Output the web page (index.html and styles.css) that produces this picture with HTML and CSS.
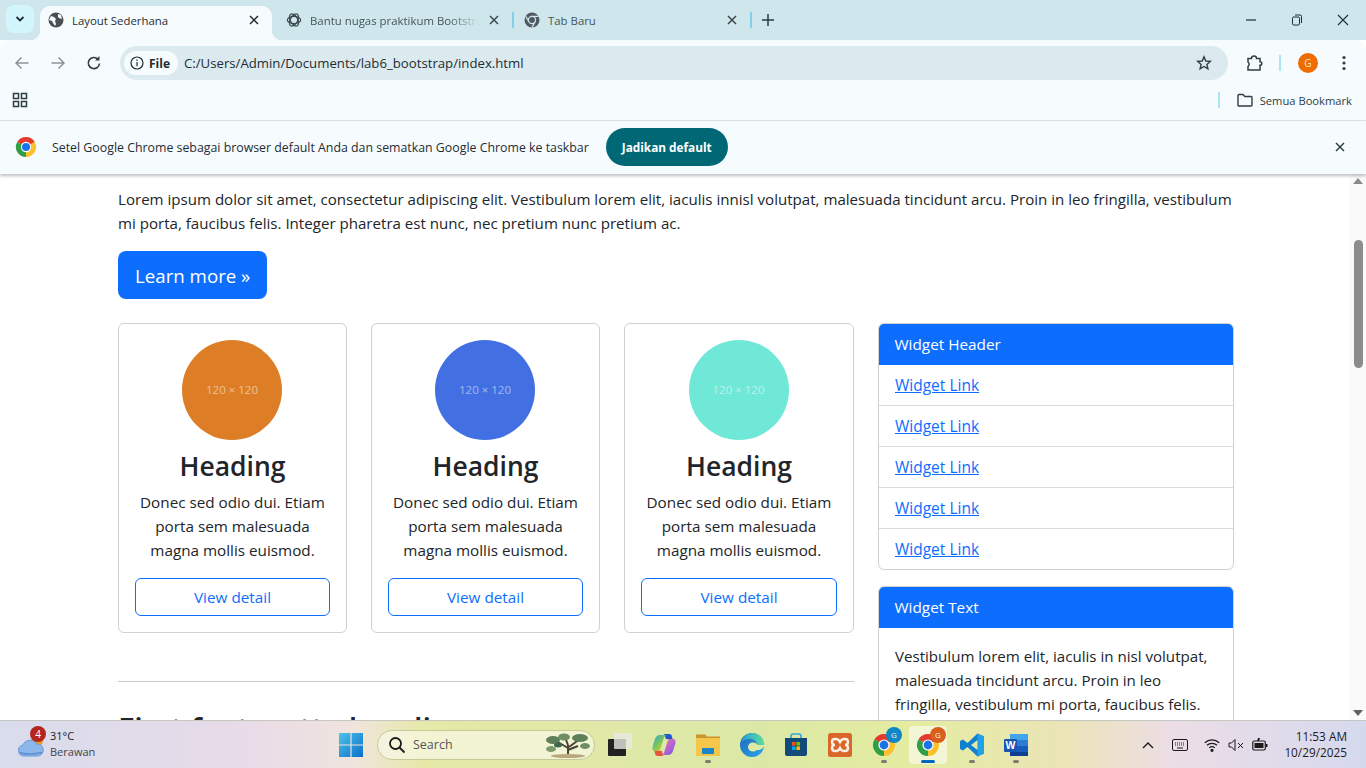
FILE: index.html
```html
<!DOCTYPE html>
<html lang="id">
<head>
  <meta charset="UTF-8" />
  <title>Layout Sederhana</title>
  <link rel="stylesheet" href="styles.css">
</head>
<body>
  <svg class="defs" width="0" height="0">
    <symbol id="chrome" viewBox="0 0 24 24">
      <path fill="#e33b2e" d="M12 12 2.470 6.500A11 11 0 0 1 21.530 6.500Z"/>
      <path fill="#fbc02d" d="M12 12 21.530 6.500A11 11 0 0 1 12 23Z"/>
      <path fill="#2f9e44" d="M12 12V23A11 11 0 0 1 2.470 6.500Z"/>
      <circle cx="12" cy="12" r="5.600" fill="#fff"/>
      <circle cx="12" cy="12" r="4.400" fill="#1a73e8"/>
    </symbol>
    <symbol id="close" viewBox="0 0 12 12">
      <path d="M2 2 10 10M10 2 2 10" fill="none" stroke="currentColor" stroke-width="1.500"/>
    </symbol>
  </svg>

  <div class="tabstrip">
    <div class="tab-menu">
      <svg width="10" height="10" viewBox="0 0 10 10"><path d="M1.500 3 5 6.500 8.500 3" fill="none" stroke="#1f2d33" stroke-width="1.800"/></svg>
    </div>
    <div class="tab active">
      <svg width="16" height="16" viewBox="0 0 16 16"><circle cx="8" cy="8" r="7.500" fill="#474f53"/><path d="M3 4l3 1 2 2-1 2 1 3-1 2-2-3-1-2-3-1zM10 2l3 1 1 4-3-1-1-1z" fill="#f7fbfd"/></svg>
      <span class="tab-title">Layout Sederhana</span>
      <svg class="tab-x" width="12" height="12"><use href="#close"/></svg>
    </div>
    <div class="tab second">
      <svg width="16" height="16" viewBox="0 0 24 24" fill="none" stroke="#3c494f" stroke-width="1.800"><ellipse cx="12" cy="12" rx="10" ry="5.500"/><ellipse cx="12" cy="12" rx="10" ry="5.500" transform="rotate(60 12 12)"/><ellipse cx="12" cy="12" rx="10" ry="5.500" transform="rotate(120 12 12)"/></svg>
      <span class="tab-title fade">Bantu nugas praktikum Bootstrap</span>
      <svg class="tab-x" width="12" height="12"><use href="#close"/></svg>
    </div>
    <i class="tab-sep"></i>
    <div class="tab third">
      <svg width="16" height="16" viewBox="0 0 16 16"><circle cx="8" cy="8" r="7.500" fill="#4f5a5f"/><circle cx="8" cy="8" r="3.600" fill="#4f5a5f" stroke="#d0e7ec" stroke-width="1.200"/><path d="M8 4.400h6.500M4.900 9.800 1.800 4.400M11.100 9.800 8 15.400" stroke="#d0e7ec" stroke-width="1.200"/></svg>
      <span class="tab-title">Tab Baru</span>
      <svg class="tab-x" width="12" height="12"><use href="#close"/></svg>
    </div>
    <i class="tab-sep"></i>
    <svg class="new-tab" width="12" height="12" viewBox="0 0 12 12"><path d="M6 0v12M0 6h12" stroke="#2c3b41" stroke-width="1.500"/></svg>
    <div class="win-btns">
      <svg width="12" height="12" viewBox="0 0 12 12"><path d="M1 6h10" stroke="#1f2d33" stroke-width="1.200"/></svg>
      <svg width="12" height="12" viewBox="0 0 12 12" fill="none" stroke="#1f2d33"><rect x="1.500" y="3" width="7" height="8" rx="1.200"/><path d="M4 1h5a1.500 1.500 0 0 1 1.500 1.500V9"/></svg>
      <svg width="12" height="12" viewBox="0 0 12 12"><path d="M1 1 11 11M11 1 1 11" stroke="#1f2d33" stroke-width="1.100"/></svg>
    </div>
  </div>

  <div class="toolbar">
    <svg class="nav-icon" width="16" height="16" viewBox="0 0 16 16" fill="none" stroke="#8b979c" stroke-width="1.500"><path d="M14.500 8H2M7.500 2.500 2 8l5.500 5.500"/></svg>
    <svg class="nav-icon" width="16" height="16" viewBox="0 0 16 16" fill="none" stroke="#8b979c" stroke-width="1.500"><path d="M1.500 8H14M8.500 2.500 14 8l-5.500 5.500"/></svg>
    <svg class="nav-icon" width="16" height="16" viewBox="0 0 16 16" fill="none" stroke="#2f3e44" stroke-width="1.600"><path d="M13.500 8.500A5.600 5.600 0 1 1 12 4.200"/><path d="M13.500 1v4.500H9" fill="#2f3e44" stroke="none"/></svg>
    <div class="omnibox">
      <div class="site-chip">
        <svg width="14" height="14" viewBox="0 0 14 14" fill="none" stroke="#1f2d33" stroke-width="1.200"><circle cx="7" cy="7" r="6"/><path d="M7 6v4.200M7 3.500v1.400"/></svg>
        <b>File</b>
      </div>
      <span class="url">C:/Users/Admin/Documents/lab6_bootstrap/index.html</span>
      <svg class="star" width="16" height="16" viewBox="0 0 16 16" fill="none" stroke="#2f3e44" stroke-width="1.400"><path d="M8 1.800 9.800 6l4.500.4-3.400 3 1 4.400L8 11.500l-3.900 2.300 1-4.400-3.400-3L6.200 6z"/></svg>
    </div>
    <svg class="ext" width="18" height="18" viewBox="0 0 18 18" fill="none" stroke="#2f3e44" stroke-width="1.500"><path d="M3 4.500h3.500a2.500 2.500 0 0 1 5 0H15v3.200a1.800 1.800 0 0 1 0 3.600V16H3v-3.500a2.800 2.800 0 0 0 0-4.500z"/></svg>
    <i class="tool-sep"></i>
    <span class="avatar">G</span>
    <svg class="kebab" width="4" height="16" viewBox="0 0 4 16" fill="#2f3e44"><circle cx="2" cy="2.500" r="1.600"/><circle cx="2" cy="8" r="1.600"/><circle cx="2" cy="13.500" r="1.600"/></svg>
  </div>

  <div class="bookmarks">
    <svg width="16" height="16" viewBox="0 0 16 16" fill="none" stroke="#2f3e44" stroke-width="1.500"><rect x="1.500" y="1.500" width="5" height="5"/><rect x="9.500" y="1.500" width="5" height="5"/><rect x="1.500" y="9.500" width="5" height="5"/><rect x="9.500" y="9.500" width="5" height="5"/></svg>
    <i class="bm-sep"></i>
    <svg width="18" height="16" viewBox="0 0 18 16" fill="none" stroke="#2f3e44" stroke-width="1.400"><path d="M2 3.500a1 1 0 0 1 1-1h4l1.800 2H15a1 1 0 0 1 1 1V13a1 1 0 0 1-1 1H3a1 1 0 0 1-1-1z"/></svg>
    <span class="bm-label">Semua Bookmark</span>
  </div>

  <div class="infobar">
    <svg width="22" height="22"><use href="#chrome"/></svg>
    <span class="info-text">Setel Google Chrome sebagai browser default Anda dan sematkan Google Chrome ke taskbar</span>
    <button class="info-btn">Jadikan default</button>
    <svg class="info-x" width="12" height="12"><use href="#close"/></svg>
  </div>

  <div class="viewport">
    <main class="page">
      <p class="lead">Lorem ipsum dolor sit amet, consectetur adipiscing elit. Vestibulum lorem elit, iaculis innisl volutpat, malesuada tincidunt arcu. Proin in leo fringilla, vestibulum mi porta, faucibus felis. Integer pharetra est nunc, nec pretium nunc pretium ac.</p>
      <a class="btn-lg" href="#">Learn more »</a>

      <div class="columns">
        <div class="left-col">
          <div class="cards">
            <div class="card">
              <div class="thumb orange">120 × 120</div>
              <h2>Heading</h2>
              <p>Donec sed odio dui. Etiam porta sem malesuada magna mollis euismod.</p>
              <a class="btn-outline" href="#">View detail</a>
            </div>
            <div class="card">
              <div class="thumb blue">120 × 120</div>
              <h2>Heading</h2>
              <p>Donec sed odio dui. Etiam porta sem malesuada magna mollis euismod.</p>
              <a class="btn-outline" href="#">View detail</a>
            </div>
            <div class="card">
              <div class="thumb teal">120 × 120</div>
              <h2>Heading</h2>
              <p>Donec sed odio dui. Etiam porta sem malesuada magna mollis euismod.</p>
              <a class="btn-outline" href="#">View detail</a>
            </div>
          </div>
          <hr>
          <h1 class="featurette">First featurette heading</h1>
        </div>

        <aside class="right-col">
          <div class="widget">
            <div class="widget-head">Widget Header</div>
            <a class="widget-link" href="#">Widget Link</a>
            <a class="widget-link" href="#">Widget Link</a>
            <a class="widget-link" href="#">Widget Link</a>
            <a class="widget-link" href="#">Widget Link</a>
            <a class="widget-link" href="#">Widget Link</a>
          </div>
          <div class="widget">
            <div class="widget-head">Widget Text</div>
            <p class="widget-body">Vestibulum lorem elit, iaculis in nisl volutpat, malesuada tincidunt arcu. Proin in leo fringilla, vestibulum mi porta, faucibus felis. Integer pharetra est nunc, nec pretium nunc pretium ac.</p>
          </div>
        </aside>
      </div>
    </main>
    <div class="scrollbar">
      <svg width="10" height="6" viewBox="0 0 10 6"><path d="M5 0 10 6H0z" fill="#8a8a8a"/></svg>
      <div class="thumb-bar"></div>
      <svg class="arrow-down" width="10" height="6" viewBox="0 0 10 6"><path d="M0 0H10L5 6z" fill="#5f5f5f"/></svg>
    </div>
  </div>

  <footer class="taskbar">
    <div class="weather">
      <svg class="cloud" width="26" height="24" viewBox="0 0 26 24"><circle cx="19" cy="8" r="6" fill="#f09a2a"/><path d="M6 23a5.500 5.500 0 0 1-1-10.900A7.500 7.500 0 0 1 18.500 11a6 6 0 0 1 1.500 12z" fill="#8db6ea" stroke="#6b9bd8"/><path d="M2 19.500c4 2 14 2 22 0" fill="none" stroke="#5f8fd0" stroke-width="1.500"/></svg>
      <span class="badge">4</span>
      <div class="weather-text"><span>31°C</span><span class="muted">Berawan</span></div>
    </div>

    <div class="apps">
      <span class="app"><svg width="24" height="24" viewBox="0 0 24 24"><defs><linearGradient id="win" x1="0" y1="0" x2="1" y2="1"><stop offset="0" stop-color="#4fc3ea"/><stop offset="1" stop-color="#0a6fc9"/></linearGradient></defs><path fill="url(#win)" d="M0 0h11.400v11.400H0zM12.600 0H24v11.400H12.600zM0 12.600h11.400V24H0zM12.600 12.600H24V24H12.600z"/></svg></span>
      <div class="search">
        <svg width="18" height="18" viewBox="0 0 18 18" fill="none" stroke="#1b1b1b" stroke-width="1.800"><circle cx="7.500" cy="7.500" r="5.500"/><path d="M11.500 11.500 16.500 16.500"/></svg>
        <span>Search</span>
        <svg class="tree" width="48" height="26" viewBox="0 0 48 26"><path d="M24 24V13M24 16 12 9M25 15 36 7M24 13 21 5M24 18 34 14" stroke="#4b4335" stroke-width="2" fill="none"/><ellipse cx="9" cy="8" rx="7" ry="4" fill="#5d7f5a"/><ellipse cx="20" cy="5" rx="6" ry="3.500" fill="#6f8e64"/><ellipse cx="36" cy="6" rx="8" ry="4" fill="#5d7f5a"/><ellipse cx="7" cy="17" rx="5" ry="3" fill="#7d9a6c"/><ellipse cx="41" cy="14" rx="5" ry="3" fill="#6f8e64"/><ellipse cx="14" cy="13" rx="4" ry="2.500" fill="#3f6650"/><ellipse cx="24" cy="24" rx="17" ry="2" fill="#b9a77d"/></svg>
      </div>
      <span class="app"><svg width="24" height="24" viewBox="0 0 24 24"><rect x="0" y="6" width="18" height="17" rx="1" fill="#222"/><rect x="6" y="0" width="18" height="16" rx="1" fill="#e9e9e2" fill-opacity=".8"/></svg></span>
      <span class="app"><svg width="24" height="24" viewBox="0 0 24 24"><defs><linearGradient id="cop" x1="0" y1="0" x2="1" y2="1"><stop offset="0" stop-color="#1fa6e0"/><stop offset=".55" stop-color="#8cc84b"/><stop offset="1" stop-color="#f2c230"/></linearGradient><linearGradient id="cop2" x1="0" y1="0" x2="1" y2="1"><stop offset="0" stop-color="#f27a9a"/><stop offset=".6" stop-color="#b060d8"/><stop offset="1" stop-color="#5a60e0"/></linearGradient></defs><path fill="#2458d0" d="M12 1h5c2 0 3 1 3 3l1 3-7-1z"/><path fill="#e8553c" d="M11 23H6c-2 0-3-1-3-3l-1-3 8 1z"/><path fill="url(#cop)" d="M8 2h7c-2 0-3 2-3.500 4L9 14c-.5 2-2 4-4 4H3c-2 0-3-2-2.500-4L3 6c.5-2 2.500-4 5-4z"/><path fill="url(#cop2)" d="M16 22H9c2 0 3-2 3.500-4L15 10c.5-2 2-4 4-4h2c2 0 3 2 2.500 4L21 18c-.5 2-2.500 4-5 4z"/></svg></span>
      <span class="app dot"><svg width="24" height="24" viewBox="0 0 24 24"><path fill="#c9962a" d="M0 1.500h9l2 2h13v4H0z"/><path fill="#f5c64a" d="M0 5h24v18H0z"/><rect x="6" y="15" width="12" height="6" rx="1" fill="#1a86c8"/></svg></span>
      <span class="app"><svg width="24" height="24" viewBox="0 0 24 24"><defs><linearGradient id="edge" x1="0" y1="0" x2="1" y2="1"><stop offset="0" stop-color="#1f66b8"/><stop offset="1" stop-color="#2aa8ea"/></linearGradient><linearGradient id="edge2" x1="0" y1="0" x2="1" y2="0"><stop offset="0" stop-color="#2c9fd8"/><stop offset="1" stop-color="#5ade9a"/></linearGradient></defs><circle cx="12" cy="12" r="12" fill="url(#edge)"/><path fill="url(#edge2)" d="M1.500 9C3 3.500 7.500 0 12 0c7 0 12 5 12 12 0 3-3 5-6 5-2 0-3-1-2.500-1.500 1-1 1.500-2 1.500-3.500C17 8 13.500 6 10 6 6 6 3 7 1.500 9z"/><ellipse cx="13" cy="14" rx="5" ry="4.500" fill="#dfe9a6"/><path fill="#dfe9a6" d="M13 12h11c0 2.500-3 5-6 5s-5 0-5-2z"/></svg></span>
      <span class="app"><svg width="24" height="24" viewBox="0 0 24 24"><path d="M7 6V3.500C7 2 8 1 9 1h6c1 0 2 1 2 2.500V6" fill="none" stroke="#38a6dc" stroke-width="1.600"/><path fill="#124a78" d="M1 5h22v16a2 2 0 0 1-2 2H3a2 2 0 0 1-2-2z"/><path fill="#f25022" d="M8 9h3.600v3.600H8z"/><path fill="#7fba00" d="M12.400 9H16v3.600h-3.600z"/><path fill="#00a4ef" d="M8 13.400h3.600V17H8z"/><path fill="#ffb900" d="M12.400 13.400H16V17h-3.600z"/></svg></span>
      <span class="app"><svg width="24" height="24" viewBox="0 0 24 24"><rect width="24" height="24" rx="2.500" fill="#d9672a"/><path d="M12 9c-1-2-2-3-4-3H7C5 6 4 7 4 9s1 3 3 3c-2 0-3 1-3 3s1 3 3 3h1c2 0 3-1 4-3 1 2 2 3 4 3h1c2 0 3-1 3-3s-1-3-3-3c2 0 3-1 3-3s-1-3-3-3h-1c-2 0-3 1-4 3z" fill="none" stroke="#fbeee2" stroke-width="2.400"/></svg></span>
      <span class="app dot"><svg width="24" height="24"><use href="#chrome"/></svg><span class="app-badge g-blue">G</span></span>
      <span class="app dot current"><svg width="24" height="24"><use href="#chrome"/></svg><span class="app-badge g-orange">G</span></span>
      <span class="app dot"><svg width="24" height="24" viewBox="0 0 24 24"><path fill="#0f7fd0" d="M17.500 .5 24 3.500v17l-6.500 3-10-9.500-4.500 3.500L0 16V8l3-1.500L7.500 10z"/><path fill="#22a0ea" d="M17.500 .5 24 3.500v17l-6.500 3z"/><path fill="#e3eaa8" d="M17.500 7 11 12l6.500 5z"/></svg></span>
      <span class="app dot"><svg width="24" height="24" viewBox="0 0 24 24"><path fill="#41a5ee" d="M6 1h18v6H6z"/><path fill="#2b7cd3" d="M6 7h18v6H6z"/><path fill="#185abd" d="M6 13h18v6H6z"/><path fill="#103f91" d="M6 19h18v4H6z"/><rect x="0" y="6" width="13" height="13" rx="1" fill="#1a56b0"/><text class="word-w" x="6.500" y="16">W</text></svg></span>
    </div>

    <div class="tray">
      <svg width="12" height="8" viewBox="0 0 12 8"><path d="M1 7 6 2l5 5" fill="none" stroke="#1a1a1a" stroke-width="1.400"/></svg>
      <svg class="tray-kbd" width="16" height="12" viewBox="0 0 16 12" fill="none" stroke="#1a1a1a"><rect x=".5" y=".5" width="15" height="11" rx="1.500"/><path d="M3 4h10M3 6h10" stroke-dasharray="1 1"/><path d="M5 9h6"/></svg>
      <svg class="tray-wifi" width="16" height="14" viewBox="0 0 16 14" fill="none" stroke="#1a1a1a" stroke-width="1.200"><path d="M.8 4.800a10.500 10.500 0 0 1 14.400 0M3 7.300a7.300 7.300 0 0 1 10 0M5.300 9.800a4 4 0 0 1 5.400 0"/><circle cx="8" cy="12.300" r="1" fill="#1a1a1a"/></svg>
      <svg class="tray-vol" width="16" height="14" viewBox="0 0 16 14" fill="none" stroke="#1a1a1a"><path d="M1 5h2.500L7 1.500v11L3.500 9H1z"/><path d="M10 5l5 5M15 5l-5 5"/></svg>
      <svg class="tray-batt" width="16" height="14" viewBox="0 0 16 14"><rect x=".8" y="3" width="12.500" height="9" rx="1.500" fill="none" stroke="#1a1a1a" stroke-width="1.200"/><rect x="2.500" y="5" width="9" height="5" fill="#1a1a1a"/><rect x="14" y="6" width="1.500" height="3" fill="#1a1a1a"/><path d="M6 0h2L7 3H5z" fill="#1a1a1a"/></svg>
      <div class="clock"><span>11:53 AM</span><span>10/29/2025</span></div>
    </div>
  </footer>
</body>
</html>
```

FILE: styles.css
```css
* { box-sizing: border-box; }
html, body { margin: 0; height: 100%; overflow: hidden; }
body { display: flex; flex-direction: column; font-family: "Open Sans", "Noto Sans", sans-serif; color: #212529; background: #fff; }
.defs { position: absolute; }

/* browser chrome */
.tabstrip { height: 40px; flex: none; display: flex; align-items: center; background: #cfe7ec; padding-left: 6px; font-size: 11.400px; color: #1f2d33; }
.tab-menu { width: 28px; height: 28px; margin-bottom: 2px; border-radius: 8px; background: #d3f6fd; display: flex; align-items: center; justify-content: center; }
.tab { width: 234px; height: 34px; margin-top: 6px; padding: 0 12px 6px 8px; display: flex; align-items: center; gap: 8px; color: #46545a; position: relative; }
.tab.active { width: 232px; margin-left: 6px; background: #f6fbfe; border-radius: 10px 10px 0 0; color: #1f2d33; }
.tab.active::before, .tab.active::after { content: ""; position: absolute; bottom: 0; width: 10px; height: 10px; }
.tab.active::before { left: -10px; background: radial-gradient(circle at 0 0, transparent 10px, #f6fbfe 10.500px); }
.tab.active::after { right: -10px; background: radial-gradient(circle at 100% 0, transparent 10px, #f6fbfe 10.500px); }
.tab.second { margin-left: 6px; }
.tab.third { margin-left: 2px; }
.tab-title { flex: 1; white-space: nowrap; overflow: hidden; }
.tab-title.fade { -webkit-mask-image: linear-gradient(to right, #000 82%, transparent); mask-image: linear-gradient(to right, #000 82%, transparent); }
.tab-x { flex: none; color: #3a484e; }
.tab.active .tab-x { color: #1f2d33; }
.tab-sep { width: 2px; height: 16px; background: #7fd3e6; flex: none; }
.new-tab { margin-left: 10px; }
.win-btns { margin-left: auto; width: 132px; padding: 0 17px 0 11px; display: flex; justify-content: space-between; }

.toolbar { height: 40px; flex: none; display: flex; align-items: center; background: #f6fbfe; padding: 6px 0 0 14px; border-radius: 10px 10px 0 0; }
.nav-icon { margin-right: 20px; }
.omnibox { width: 1108px; height: 34px; margin-left: -2px; padding: 0 16px 0 4px; border-radius: 17px; background: #dbeaef; display: flex; align-items: center; font-size: 13.200px; color: #1f2d33; }
.site-chip { height: 24px; padding: 0 8px 0 6px; border-radius: 12px; background: #f6fbfe; display: flex; align-items: center; gap: 5px; font-size: 12px; }
.url { margin-left: 6px; flex: 1; }
.star { flex: none; }
.ext { margin-left: 17px; }
.tool-sep { width: 2px; height: 16px; background: #a8e6f4; margin-left: 16px; }
.avatar { width: 20px; height: 20px; margin-left: 17px; border-radius: 50%; background: #ef6c00; color: #fde6d2; font-size: 10px; display: flex; align-items: center; justify-content: center; }
.kebab { margin-left: 24px; }

.bookmarks { height: 41px; flex: none; display: flex; align-items: center; background: #f6fbfe; border-bottom: 1px solid #dfe3e5; padding: 0 14px 0 12px; font-size: 11.200px; color: #2f3e44; }
.bm-sep { width: 2px; height: 16px; background: #a8e6f4; margin-left: auto; margin-right: 16px; }
.bm-label { margin-left: 6px; }

.infobar { height: 53px; padding: 0 20px 2px 15px; flex: none; display: flex; align-items: center; background: #f6fbfe; box-shadow: 0 2px 3px rgba(0,0,0,.25); position: relative; z-index: 1; font-size: 12.350px; color: #1f2d33; }
.info-text { margin: 1px 0 0 15px; }
.info-btn { margin-left: 17px; height: 38px; width: 122px; border: 0; border-radius: 19px; background: #006874; color: #fff; font: 700 11.800px "Open Sans", sans-serif; }
.info-x { margin-left: auto; color: #2f3e44; }

/* page */
.viewport { flex: 1; min-height: 0; display: flex; overflow: hidden; }
.page { flex: 1; min-width: 0; padding: 13px 116px 0 118px; font-size: 15.100px; line-height: 24px; }
.lead { margin: 0 0 16px; }
.btn-lg { display: inline-block; height: 48px; padding: 0 17px; line-height: 50px; border-radius: 8px; background: #0d6efd; color: #fff; font-size: 18.700px; text-decoration: none; }
.columns { display: flex; gap: 24px; margin-top: 24px; }
.left-col { width: 736px; flex: none; }
.right-col { width: 356px; flex: none; display: flex; flex-direction: column; gap: 16px; }
.cards { display: grid; grid-template-columns: 229px 229px 1fr; gap: 24px; }
.card { height: 310px; padding: 16px; border: 1px solid #cfd1d3; border-radius: 6px; text-align: center; display: flex; flex-direction: column; align-items: center; }
.thumb { width: 100px; height: 100px; margin-right: 1px; flex: none; border-radius: 50%; display: flex; align-items: center; justify-content: center; font-size: 11.500px; color: rgba(255,255,255,.5); }
.thumb.orange { background: #dd7e26; }
.thumb.blue { background: #4270e2; }
.thumb.teal { background: #70e8d8; }
.card h2 { margin: 8px 0 5px; font-size: 26.500px; line-height: 37px; font-weight: 600; }
.card p { margin: 0 0 16px; font-size: 15.250px; }
.btn-outline { width: 100%; height: 38px; line-height: 37px; border: 1px solid #0d6efd; border-radius: 6px; font-size: 15.300px; color: #0d6efd; text-decoration: none; }
hr { margin: 48px 0 0; border: 0; border-top: 1px solid #c9cacb; }
.featurette { margin: 27px 0 0; font-size: 30.500px; line-height: 38px; font-weight: 600; white-space: nowrap; }
.widget { border: 1px solid #cfd1d3; border-radius: 6px; overflow: hidden; }
.widget-head { height: 41px; padding: 0 15.500px; line-height: 40px; background: #0d6efd; color: #fff; font-size: 15.300px; }
.widget-link { display: block; height: 41px; padding: 0 16px; line-height: 41px; color: #0d6efd; font-size: 15.500px; border-top: 1px solid #d9dadb; }
.widget-head + .widget-link { height: 40px; line-height: 40px; border-top: 0; }
.widget-body { margin: 0; padding: 16px; }

.scrollbar { width: 16px; flex: none; background: #fafafa; display: flex; flex-direction: column; align-items: center; padding-top: 4px; padding-bottom: 4px; }
.thumb-bar { width: 9px; height: 128px; margin-top: 56px; border-radius: 5px; background: #8c8c8c; }
.arrow-down { margin-top: auto; }

/* taskbar */
.taskbar { height: 48px; flex: none; position: relative; z-index: 2; display: flex; align-items: center; font-size: 12px; color: #1b1b1b; background: linear-gradient(to right, #d8dcec 0%, #e9dbe8 18%, #f0e4dc 26%, #e6e9a8 31%, #dbe8a6 55%, #e4eca0 67%, #ebe4b8 78%, #ecdde6 86%, #d5d9ee 100%); border-top: 1px solid #c5c7c0; }
.weather { width: 339px; flex: none; padding-left: 18px; display: flex; align-items: center; position: relative; }
.cloud { margin-top: 0; }
.badge { position: absolute; left: 30px; top: -4px; width: 16px; height: 16px; border-radius: 50%; background: #b3261e; color: #fff; font-size: 10px; line-height: 16px; text-align: center; }
.weather-text { margin-left: 6px; margin-top: -2px; display: flex; flex-direction: column; font-size: 11px; line-height: 16px; }
.muted { color: #444; }
.apps { display: flex; align-items: center; }
.app { width: 44px; height: 44px; flex: none; display: flex; align-items: center; justify-content: center; position: relative; }
.app:first-child { width: 24px; margin-right: 14px; }
.search { width: 218px; height: 30px; margin-right: 3px; padding: 0 2px 0 10px; border-radius: 15px; border: 1px solid #c6cb96; background: rgba(250,250,235,.65); display: flex; align-items: center; gap: 7px; font-size: 12.500px; color: #555; }
.tree { margin-left: auto; }
.dot::after { content: ""; position: absolute; bottom: 4px; left: 19px; width: 6px; height: 3px; border-radius: 2px; background: #7c7c70; }
.current::before { content: ""; position: absolute; left: 3px; top: 3px; width: 38px; height: 38px; border-radius: 4px; background: rgba(255,255,255,.55); }
.current svg { position: relative; }
.current::after { width: 14px; left: 15px; background: #0067c0; }
.app-badge { position: absolute; top: 4px; right: 4px; width: 16px; height: 16px; border-radius: 50%; font-size: 8px; line-height: 16px; text-align: center; color: #f4f4f4; }
.g-blue { background: #0f86c6; }
.g-orange { background: #d9601a; }
.word-w { font: 700 10.500px "Liberation Sans", sans-serif; fill: #fff; text-anchor: middle; }
.tray { margin-left: auto; padding-right: 19px; display: flex; align-items: center; }
.tray-kbd { margin-left: 18px; }
.tray-wifi { margin-left: 16px; }
.tray-vol { margin-left: 8px; }
.tray-batt { margin-left: 8px; }
.clock { margin-left: 16px; margin-top: -2px; display: flex; flex-direction: column; align-items: flex-end; font-size: 11.800px; line-height: 16px; }
```
